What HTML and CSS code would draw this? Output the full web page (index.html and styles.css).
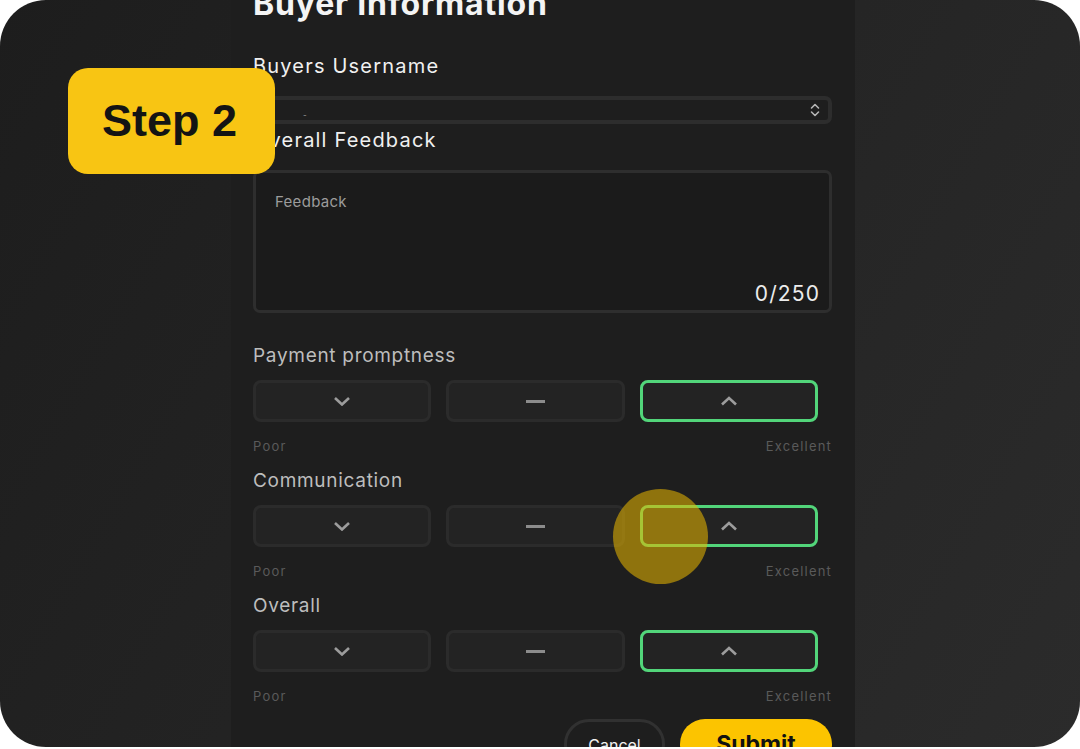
FILE: index.html
```html
<!DOCTYPE html>
<html lang="en">
<head>
<meta charset="utf-8">
<title>Buyer Information</title>
<link rel="stylesheet" href="styles.css">
</head>
<body>
<div class="frame">
  <div class="column">
    <h1 class="title">Buyer Information</h1>
    <div class="label label-strong">Buyers Username</div>
    <div class="select">
      <span class="select-value">-</span>
      <svg class="select-icon" width="10" height="14" viewBox="0 0 10 14"><path d="M1.5 5 L5 1.5 L8.5 5 M1.5 9 L5 12.5 L8.5 9" fill="none" stroke="#b5b5b5" stroke-width="1.6" stroke-linecap="round" stroke-linejoin="round"/></svg>
    </div>
    <div class="label label-strong label-tight">Overall Feedback</div>
    <div class="textarea">
      <div class="placeholder">Feedback</div>
      <div class="counter">0/250</div>
    </div>

    <div class="rating first">
      <div class="label">Payment promptness</div>
      <div class="choices">
        <div class="choice"><svg width="18" height="10" viewBox="0 0 18 10"><path d="M2 2 L9 8.5 L16 2" fill="none" stroke="#9c9c9c" stroke-width="2.6"/></svg></div>
        <div class="choice"><span class="dash"></span></div>
        <div class="choice selected"><svg width="18" height="10" viewBox="0 0 18 10"><path d="M2 8.5 L9 2 L16 8.5" fill="none" stroke="#9c9c9c" stroke-width="2.6"/></svg></div>
      </div>
      <div class="scale"><span>Poor</span><span>Excellent</span></div>
    </div>

    <div class="rating">
      <div class="label">Communication</div>
      <div class="choices">
        <div class="choice"><svg width="18" height="10" viewBox="0 0 18 10"><path d="M2 2 L9 8.5 L16 2" fill="none" stroke="#9c9c9c" stroke-width="2.6"/></svg></div>
        <div class="choice"><span class="dash"></span></div>
        <div class="choice selected"><svg width="18" height="10" viewBox="0 0 18 10"><path d="M2 8.5 L9 2 L16 8.5" fill="none" stroke="#9c9c9c" stroke-width="2.6"/></svg></div>
      </div>
      <div class="scale"><span>Poor</span><span>Excellent</span></div>
    </div>

    <div class="rating">
      <div class="label">Overall</div>
      <div class="choices">
        <div class="choice"><svg width="18" height="10" viewBox="0 0 18 10"><path d="M2 2 L9 8.5 L16 2" fill="none" stroke="#9c9c9c" stroke-width="2.6"/></svg></div>
        <div class="choice"><span class="dash"></span></div>
        <div class="choice selected"><svg width="18" height="10" viewBox="0 0 18 10"><path d="M2 8.5 L9 2 L16 8.5" fill="none" stroke="#9c9c9c" stroke-width="2.6"/></svg></div>
      </div>
      <div class="scale"><span>Poor</span><span>Excellent</span></div>
    </div>

    <div class="actions">
      <button class="btn btn-cancel">Cancel</button>
      <button class="btn btn-submit">Submit</button>
    </div>
  </div>

  <div class="step-badge">Step 2</div>
  <div class="tap-dot"></div>
</div>
</body>
</html>
```

FILE: styles.css
```css
* { box-sizing: border-box; }

html, body {
  margin: 0;
  padding: 0;
  background: #ffffff;
}

.frame {
  position: relative;
  width: 1080px;
  height: 747px;
  border-radius: 46px;
  overflow: hidden;
  background: linear-gradient(120deg, #1d1d1d 0%, #242424 50%, #2b2b2b 100%);
  display: flex;
}

.column {
  margin-left: 231px;
  width: 624px;
  height: 747px;
  background: #1e1e1e;
  padding: 0 22px;
  font-family: Inter, "Noto Sans", sans-serif;
  color: #ffffff;
}

.title {
  margin: -15px 0 0 0;
  font-size: 32px;
  line-height: 38px;
  font-weight: 700;
  letter-spacing: 0.8px;
  color: #f4f4f4;
}

.label {
  font-size: 19px;
  line-height: 24px;
  letter-spacing: 0.7px;
  color: #bdbdbd;
}

.label-strong {
  font-size: 20px;
  letter-spacing: 1.2px;
  color: #f0f0f0;
  margin-top: 31px;
}

.label-tight {
  margin-top: 4px;
}

.select {
  margin-top: 18px;
  height: 28px;
  width: 579px;
  border: 4px solid #2d2d2d;
  border-radius: 7px;
  background: #1e1e1e;
  display: flex;
  align-items: center;
  justify-content: space-between;
  padding: 0 8px 0 46px;
  overflow: hidden;
}

.select-value {
  font-size: 8px;
  color: #9a9a9a;
  margin-top: 10px;
}

.select-icon { display: block; }

.textarea {
  margin-top: 18px;
  width: 579px;
  height: 143px;
  border: 3px solid #2e2e2e;
  border-radius: 7px;
  background: #1b1b1b;
  padding: 19px 9px 3px 19px;
  display: flex;
  flex-direction: column;
  justify-content: space-between;
}

.placeholder {
  font-size: 15px;
  line-height: 20px;
  color: #9c9c9c;
  letter-spacing: 0.3px;
}

.counter {
  align-self: flex-end;
  font-size: 21px;
  line-height: 26px;
  letter-spacing: 1.1px;
  color: #ececec;
}

.rating { margin-top: 15px; }
.rating.first { margin-top: 31px; }

.choices {
  margin-top: 12px;
  width: 565px;
  display: grid;
  grid-template-columns: repeat(3, 1fr);
  gap: 15px;
}

.choice {
  height: 42px;
  border: 3px solid #2b2b2b;
  border-radius: 8px;
  background: #232323;
  display: flex;
  align-items: center;
  justify-content: center;
}

.choice svg { display: block; }

.choice.selected {
  border-color: #52d57a;
}

.dash {
  display: block;
  width: 19px;
  height: 3px;
  background: #8c8c8c;
}

.scale {
  margin-top: 16px;
  width: 579px;
  display: flex;
  justify-content: space-between;
  font-size: 13px;
  line-height: 16px;
  letter-spacing: 1.2px;
  color: #5a5a5a;
}

.actions {
  margin-top: 15px;
  width: 579px;
  display: flex;
  justify-content: flex-end;
  gap: 15px;
}

.btn {
  height: 50px;
  border-radius: 25px;
  font-family: Inter, "Noto Sans", sans-serif;
  padding: 0;
  display: flex;
  align-items: flex-start;
  justify-content: center;
}

.btn-cancel {
  width: 101px;
  background: #1e1e1e;
  border: 3px solid #313131;
  color: #f0f0f0;
  font-size: 16px;
  padding-top: 13px;
}

.btn-submit {
  width: 152px;
  background: #fcc400;
  border: none;
  color: #111111;
  font-size: 23px;
  font-weight: 700;
  padding-top: 11px;
}

.step-badge {
  position: absolute;
  left: 68px;
  top: 68px;
  width: 207px;
  height: 106px;
  border-radius: 20px;
  background: #f8c513;
  color: #141414;
  font-family: "Liberation Sans", Arial, sans-serif;
  font-weight: 700;
  font-size: 45px;
  display: flex;
  align-items: center;
  justify-content: center;
  padding-right: 4px;
}

.tap-dot {
  position: absolute;
  left: 613px;
  top: 489px;
  width: 95px;
  height: 95px;
  border-radius: 50%;
  background: rgba(232, 182, 0, 0.56);
}
```
